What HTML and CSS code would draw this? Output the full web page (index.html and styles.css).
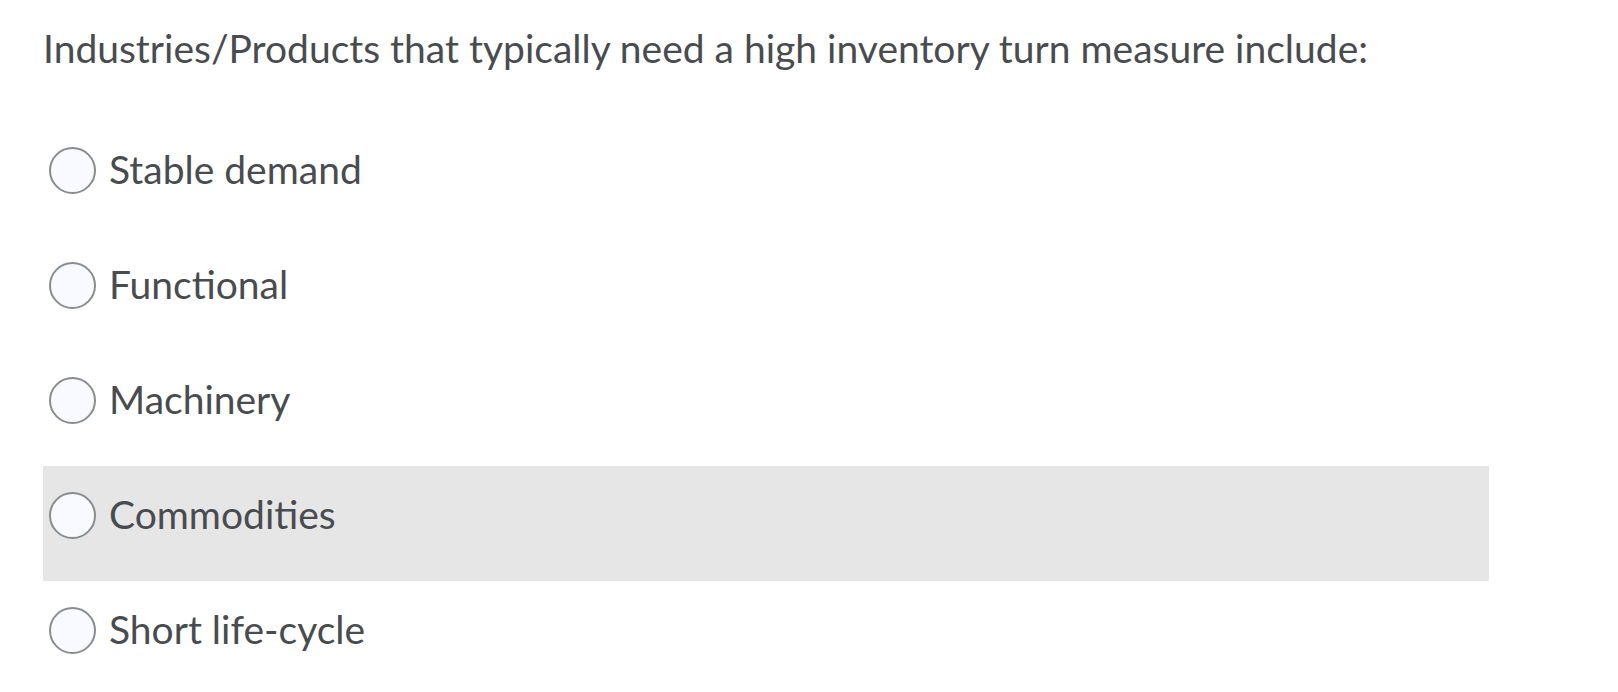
FILE: index.html
```html
<!DOCTYPE html>
<html lang="en">
<head>
<meta charset="utf-8">
<title>Question</title>
<link rel="stylesheet" href="styles.css">
</head>
<body>
<div class="question">
  <div class="question-text">Industries/Products that typically need a high inventory turn measure include:</div>
  <div class="answers">
    <label class="answer"><span class="radio"></span><span class="answer-text">Stable demand</span></label>
    <label class="answer"><span class="radio"></span><span class="answer-text">Functional</span></label>
    <label class="answer"><span class="radio"></span><span class="answer-text">Machinery</span></label>
    <label class="answer answer-hover"><span class="radio"></span><span class="answer-text">Commodities</span></label>
    <label class="answer"><span class="radio"></span><span class="answer-text">Short life-cycle</span></label>
  </div>
</div>
</body>
</html>
```

FILE: styles.css
```css
html, body {
  margin: 0;
  padding: 0;
  background: #ffffff;
}

body {
  font-family: Lato, "Open Sans", "Liberation Sans", sans-serif;
  color: #494c4f;
  overflow: hidden;
}

.question {
  padding-left: 43px;
}

.question-text {
  font-size: 39px;
  line-height: 46px;
  padding-top: 25px;
  margin-bottom: 50px;
  white-space: nowrap;
}

.answers {
  display: flex;
  flex-direction: column;
  width: 1446px;
}

.answer {
  display: flex;
  align-items: flex-start;
  height: 115px;
  box-sizing: border-box;
  padding-top: 25px;
  padding-left: 6px;
}

.answer-hover {
  background: #e6e6e6;
}

.radio {
  width: 47px;
  height: 47px;
  box-sizing: border-box;
  margin-top: 1px;
  border: 2px solid #8a8d90;
  border-radius: 50%;
  background: #f8faff;
  flex: none;
}

.answer-text {
  margin-left: 13px;
  font-size: 39px;
  line-height: 46px;
  white-space: nowrap;
}
```
